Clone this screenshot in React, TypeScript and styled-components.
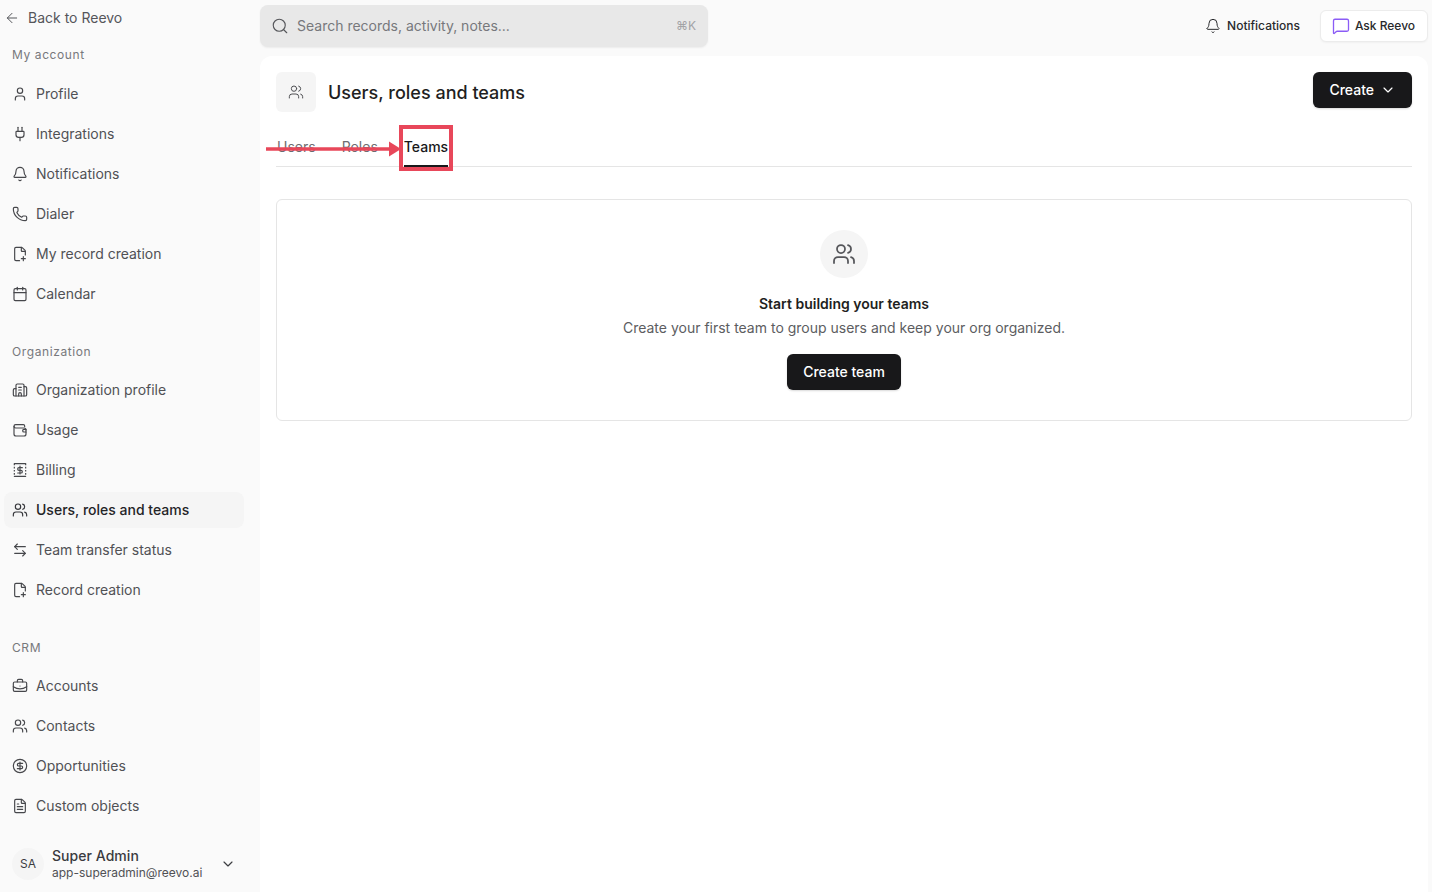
import React from 'react';
import styled, { createGlobalStyle } from 'styled-components';
import {
  ArrowLeft,
  ArrowLeftRight,
  Bell,
  BriefcaseBusiness,
  Building2,
  Calendar,
  ChevronDown,
  CircleDollarSign,
  FilePlus2,
  FileText,
  MessageSquare,
  Phone,
  Plug,
  Search,
  User,
  Users,
} from 'lucide-react';

const GlobalStyle = createGlobalStyle`
  html, body {
    margin: 0;
    height: 100%;
    background: #fafafa;
  }
  * { box-sizing: border-box; }
  body {
    font-family: Inter, 'Liberation Sans', sans-serif;
    color: #18181a;
    overflow: hidden;
  }
`;

const Shell = styled.div`
  display: flex;
  height: 892px;
  width: 1432px;
  overflow: hidden;
`;

/* sidebar */

const Sidebar = styled.aside`
  width: 260px;
  flex: none;
  display: flex;
  flex-direction: column;
  padding: 0 16px 0 4px;
`;

const BackLink = styled.div`
  height: 36px;
  display: flex;
  align-items: center;
  gap: 8px;
  padding-bottom: 1px;
  font-size: 14px;
  color: #55565a;
`;

const SectionLabel = styled.div<{ $first?: boolean }>`
  height: 20px;
  display: flex;
  align-items: center;
  padding: 0 0 2px 8px;
  margin-top: ${(p) => (p.$first ? '9px' : '30px')};
  margin-bottom: ${(p) => (p.$first ? '11px' : '10px')};
  font-size: 12px;
  letter-spacing: 0.6px;
  color: #77787c;
`;

const NavList = styled.nav`
  display: flex;
  flex-direction: column;
  gap: 4px;
`;

const NavLabel = styled.span`
  padding-bottom: 2px;
`;

const NavItem = styled.div<{ $active?: boolean }>`
  height: 36px;
  display: flex;
  align-items: center;
  gap: 8px;
  padding-left: 8px;
  border-radius: 8px;
  font-size: 14px;
  font-weight: ${(p) => (p.$active ? 500 : 400)};
  color: ${(p) => (p.$active ? '#242427' : '#505155')};
  background: ${(p) => (p.$active ? '#f5f5f5' : 'transparent')};

  svg {
    flex: none;
    color: ${(p) => (p.$active ? '#35363a' : '#46474b')};
  }
`;

const UserRow = styled.div`
  margin-top: auto;
  height: 56px;
  display: flex;
  align-items: center;
  padding: 0 8px;
  gap: 8px;
`;

const Avatar = styled.div`
  width: 32px;
  height: 32px;
  padding-bottom: 1px;
  border-radius: 50%;
  background: #f5f5f5;
  display: flex;
  align-items: center;
  justify-content: center;
  font-size: 12px;
  color: #3c3d41;
`;

const UserText = styled.div`
  flex: 1;
  display: flex;
  flex-direction: column;
`;

const UserName = styled.div`
  font-size: 14px;
  line-height: 17px;
  font-weight: 500;
  letter-spacing: 0.05px;
  color: #3a3b3f;
`;

const UserMail = styled.div`
  font-size: 12px;
  line-height: 17px;
  color: #505155;
`;

/* right side */

const Column = styled.div`
  flex: 1;
  min-width: 0;
  display: flex;
  flex-direction: column;
  padding-right: 4px;
`;

const TopBar = styled.header`
  height: 56px;
  flex: none;
  display: flex;
  align-items: flex-start;
`;

const SearchBox = styled.div`
  width: 448px;
  height: 42px;
  margin-top: 5px;
  padding: 0 12px 1px 11px;
  display: flex;
  align-items: center;
  gap: 8px;
  border-radius: 8px;
  background: #e8e8e8;
  box-shadow: 0 1px 2px rgba(0, 0, 0, 0.06);
  font-size: 14px;
  color: #77787c;

  svg { color: #55565a; flex: none; }
`;

const SearchText = styled.span`
  flex: 1;
`;

const Kbd = styled.span`
  font-size: 12px;
  color: #a2a3a6;
`;

const TopActions = styled.div`
  margin-left: auto;
  margin-top: 10px;
  display: flex;
  align-items: center;
  gap: 20px;
`;

const NotifyLink = styled.div`
  display: flex;
  align-items: center;
  gap: 6px;
  padding-bottom: 1px;
  font-size: 12px;
  font-weight: 500;
  color: #28292c;
`;

const AskButton = styled.button`
  width: 108px;
  height: 32px;
  padding: 0 1px 1px 0;
  display: flex;
  align-items: center;
  justify-content: center;
  gap: 5px;
  border-radius: 6px;
  border: 1px solid #ececec;
  background: #fff;
  box-shadow: 0 1px 2px rgba(0, 0, 0, 0.04);
  font-family: inherit;
  font-size: 12px;
  font-weight: 500;
  color: #28292c;

  svg { color: #8b5cf6; }
`;

const Panel = styled.main`
  flex: 1;
  position: relative;
  background: #fff;
  border-radius: 12px 12px 0 0;
  padding: 16px;
`;

const PanelHeader = styled.div`
  display: flex;
  align-items: flex-start;
  justify-content: space-between;
`;

const TitleGroup = styled.div`
  display: flex;
  align-items: center;
  gap: 12px;
`;

const TitleIcon = styled.div`
  width: 40px;
  height: 40px;
  border-radius: 6px;
  background: #f5f5f5;
  display: flex;
  align-items: center;
  justify-content: center;
  color: #505155;
`;

const Title = styled.h1`
  margin: 1px 0 0;
  font-size: 18px;
  font-weight: 500;
  color: #1f1f22;
`;

const DarkButton = styled.button`
  height: 36px;
  padding: 0 16px 1px;
  display: inline-flex;
  align-items: center;
  gap: 6px;
  border: none;
  border-radius: 6px;
  background: #18181a;
  color: #fff;
  font-family: inherit;
  font-size: 14px;
  font-weight: 500;
  box-shadow: 0 1px 2px rgba(0, 0, 0, 0.15);
`;

const Tabs = styled.div`
  display: flex;
  gap: 26px;
  height: 42px;
  margin-top: 13px;
  padding: 0 1px;
  border-bottom: 1px solid #e5e5e5;
`;

const Tab = styled.div<{ $active?: boolean }>`
  display: flex;
  align-items: center;
  height: 42px;
  padding-top: 2px;
  font-size: 14px;
  font-weight: ${(p) => (p.$active ? 500 : 400)};
  color: ${(p) => (p.$active ? '#18181a' : '#6c6d71')};
  border-bottom: 2px solid ${(p) => (p.$active ? '#18181a' : 'transparent')};
`;

const EmptyCard = styled.section`
  margin-top: 32px;
  height: 222px;
  border: 1px solid #e5e5e5;
  border-radius: 6px;
  display: flex;
  flex-direction: column;
  align-items: center;
  padding-top: 30px;
`;

const EmptyIcon = styled.div`
  width: 48px;
  height: 48px;
  border-radius: 50%;
  background: #f5f5f5;
  display: flex;
  align-items: center;
  justify-content: center;
  color: #55565a;
`;

const EmptyTitle = styled.div`
  margin-top: 16px;
  font-size: 14px;
  line-height: 20px;
  font-weight: 600;
  color: #1f1f22;
`;

const EmptyText = styled.div`
  margin-top: 4px;
  margin-bottom: 16px;
  font-size: 14px;
  line-height: 20px;
  color: #5c5d61;
`;

/* annotation drawn on top of the tabs */

const HighlightBox = styled.div`
  position: absolute;
  left: 139px;
  top: 69px;
  width: 54px;
  height: 46px;
  border: 4px solid #e8475a;
  pointer-events: none;
`;

const ArrowMark = styled.svg`
  position: absolute;
  left: 6px;
  top: 84px;
  pointer-events: none;
`;

// no exact match in lucide for these two
const BillingIcon: React.FC<{ size?: number; strokeWidth?: number }> = ({ size = 16, strokeWidth = 1.75 }) => (
  <svg width={size} height={size} viewBox="0 0 24 24" fill="none" stroke="currentColor" strokeWidth={strokeWidth} strokeLinecap="round" strokeLinejoin="round">
    <path d="M3.5 2.5h17M3.5 21.5h17" />
    <path d="M3.5 2.5v19M20.5 2.5v19" strokeDasharray="2.5 2.2" strokeLinecap="butt" />
    <path d="M12 6v12" />
    <path d="M15.5 8.5h-5a2 2 0 0 0 0 4h3a2 2 0 0 1 0 4h-5" />
  </svg>
);

const UsageIcon: React.FC<{ size?: number; strokeWidth?: number }> = ({ size = 16, strokeWidth = 1.75 }) => (
  <svg width={size} height={size} viewBox="0 0 24 24" fill="none" stroke="currentColor" strokeWidth={strokeWidth} strokeLinecap="round" strokeLinejoin="round">
    <path d="M19 7V6a2 2 0 0 0-2-2H5.5A2.5 2.5 0 0 0 3 6.5V18a3 3 0 0 0 3 3h12a3 3 0 0 0 3-3v-3" />
    <path d="M3 6.5A2.5 2.5 0 0 0 5.5 9H18a3 3 0 0 1 3 3" />
    <path d="M21 11v4h-3a2 2 0 0 1 0-4z" />
  </svg>
);

type Item = { label: string; icon: React.ComponentType<any>; active?: boolean };

const accountItems: Item[] = [
  { label: 'Profile', icon: User },
  { label: 'Integrations', icon: Plug },
  { label: 'Notifications', icon: Bell },
  { label: 'Dialer', icon: Phone },
  { label: 'My record creation', icon: FilePlus2 },
  { label: 'Calendar', icon: Calendar },
];

const orgItems: Item[] = [
  { label: 'Organization profile', icon: Building2 },
  { label: 'Usage', icon: UsageIcon },
  { label: 'Billing', icon: BillingIcon },
  { label: 'Users, roles and teams', icon: Users, active: true },
  { label: 'Team transfer status', icon: ArrowLeftRight },
  { label: 'Record creation', icon: FilePlus2 },
];

const crmItems: Item[] = [
  { label: 'Accounts', icon: BriefcaseBusiness },
  { label: 'Contacts', icon: Users },
  { label: 'Opportunities', icon: CircleDollarSign },
  { label: 'Custom objects', icon: FileText },
];

const NavGroup: React.FC<{ items: Item[] }> = ({ items }) => (
  <NavList>
    {items.map((it) => (
      <NavItem key={it.label} $active={it.active}>
        <it.icon size={16} strokeWidth={1.75} />
        <NavLabel>{it.label}</NavLabel>
      </NavItem>
    ))}
  </NavList>
);

export default function App() {
  return (
    <>
      <GlobalStyle />
      <Shell>
        <Sidebar>
          <BackLink>
            <ArrowLeft size={16} strokeWidth={1.5} />
            Back to Reevo
          </BackLink>
          <SectionLabel $first>My account</SectionLabel>
          <NavGroup items={accountItems} />
          <SectionLabel>Organization</SectionLabel>
          <NavGroup items={orgItems} />
          <SectionLabel>CRM</SectionLabel>
          <NavGroup items={crmItems} />
          <UserRow>
            <Avatar>SA</Avatar>
            <UserText>
              <UserName>Super Admin</UserName>
              <UserMail>app-superadmin@reevo.ai</UserMail>
            </UserText>
            <ChevronDown size={16} strokeWidth={1.75} color="#3c3d41" />
          </UserRow>
        </Sidebar>

        <Column>
          <TopBar>
            <SearchBox>
              <Search size={18} strokeWidth={1.5} />
              <SearchText>Search records, activity, notes...</SearchText>
              <Kbd>⌘K</Kbd>
            </SearchBox>
            <TopActions>
              <NotifyLink>
                <Bell size={16} strokeWidth={1.5} />
                Notifications
              </NotifyLink>
              <AskButton>
                <MessageSquare size={18} strokeWidth={1.75} />
                Ask Reevo
              </AskButton>
            </TopActions>
          </TopBar>

          <Panel>
            <PanelHeader>
              <TitleGroup>
                <TitleIcon>
                  <Users size={16} strokeWidth={1.5} />
                </TitleIcon>
                <Title>Users, roles and teams</Title>
              </TitleGroup>
              <DarkButton>
                Create
                <ChevronDown size={16} strokeWidth={1.75} />
              </DarkButton>
            </PanelHeader>

            <Tabs>
              <Tab>Users</Tab>
              <Tab>Roles</Tab>
              <Tab $active>Teams</Tab>
            </Tabs>

            <EmptyCard>
              <EmptyIcon>
                <Users size={24} strokeWidth={1.75} />
              </EmptyIcon>
              <EmptyTitle>Start building your teams</EmptyTitle>
              <EmptyText>Create your first team to group users and keep your org organized.</EmptyText>
              <DarkButton>Create team</DarkButton>
            </EmptyCard>

            <ArrowMark width="136" height="18" viewBox="0 0 136 18">
              <path d="M0 9H124" stroke="#e8475a" strokeWidth="3.5" fill="none" />
              <path d="M123 1.5L135 9L123 16.5Z" fill="#e8475a" />
            </ArrowMark>
            <HighlightBox />
          </Panel>
        </Column>
      </Shell>
    </>
  );
}
